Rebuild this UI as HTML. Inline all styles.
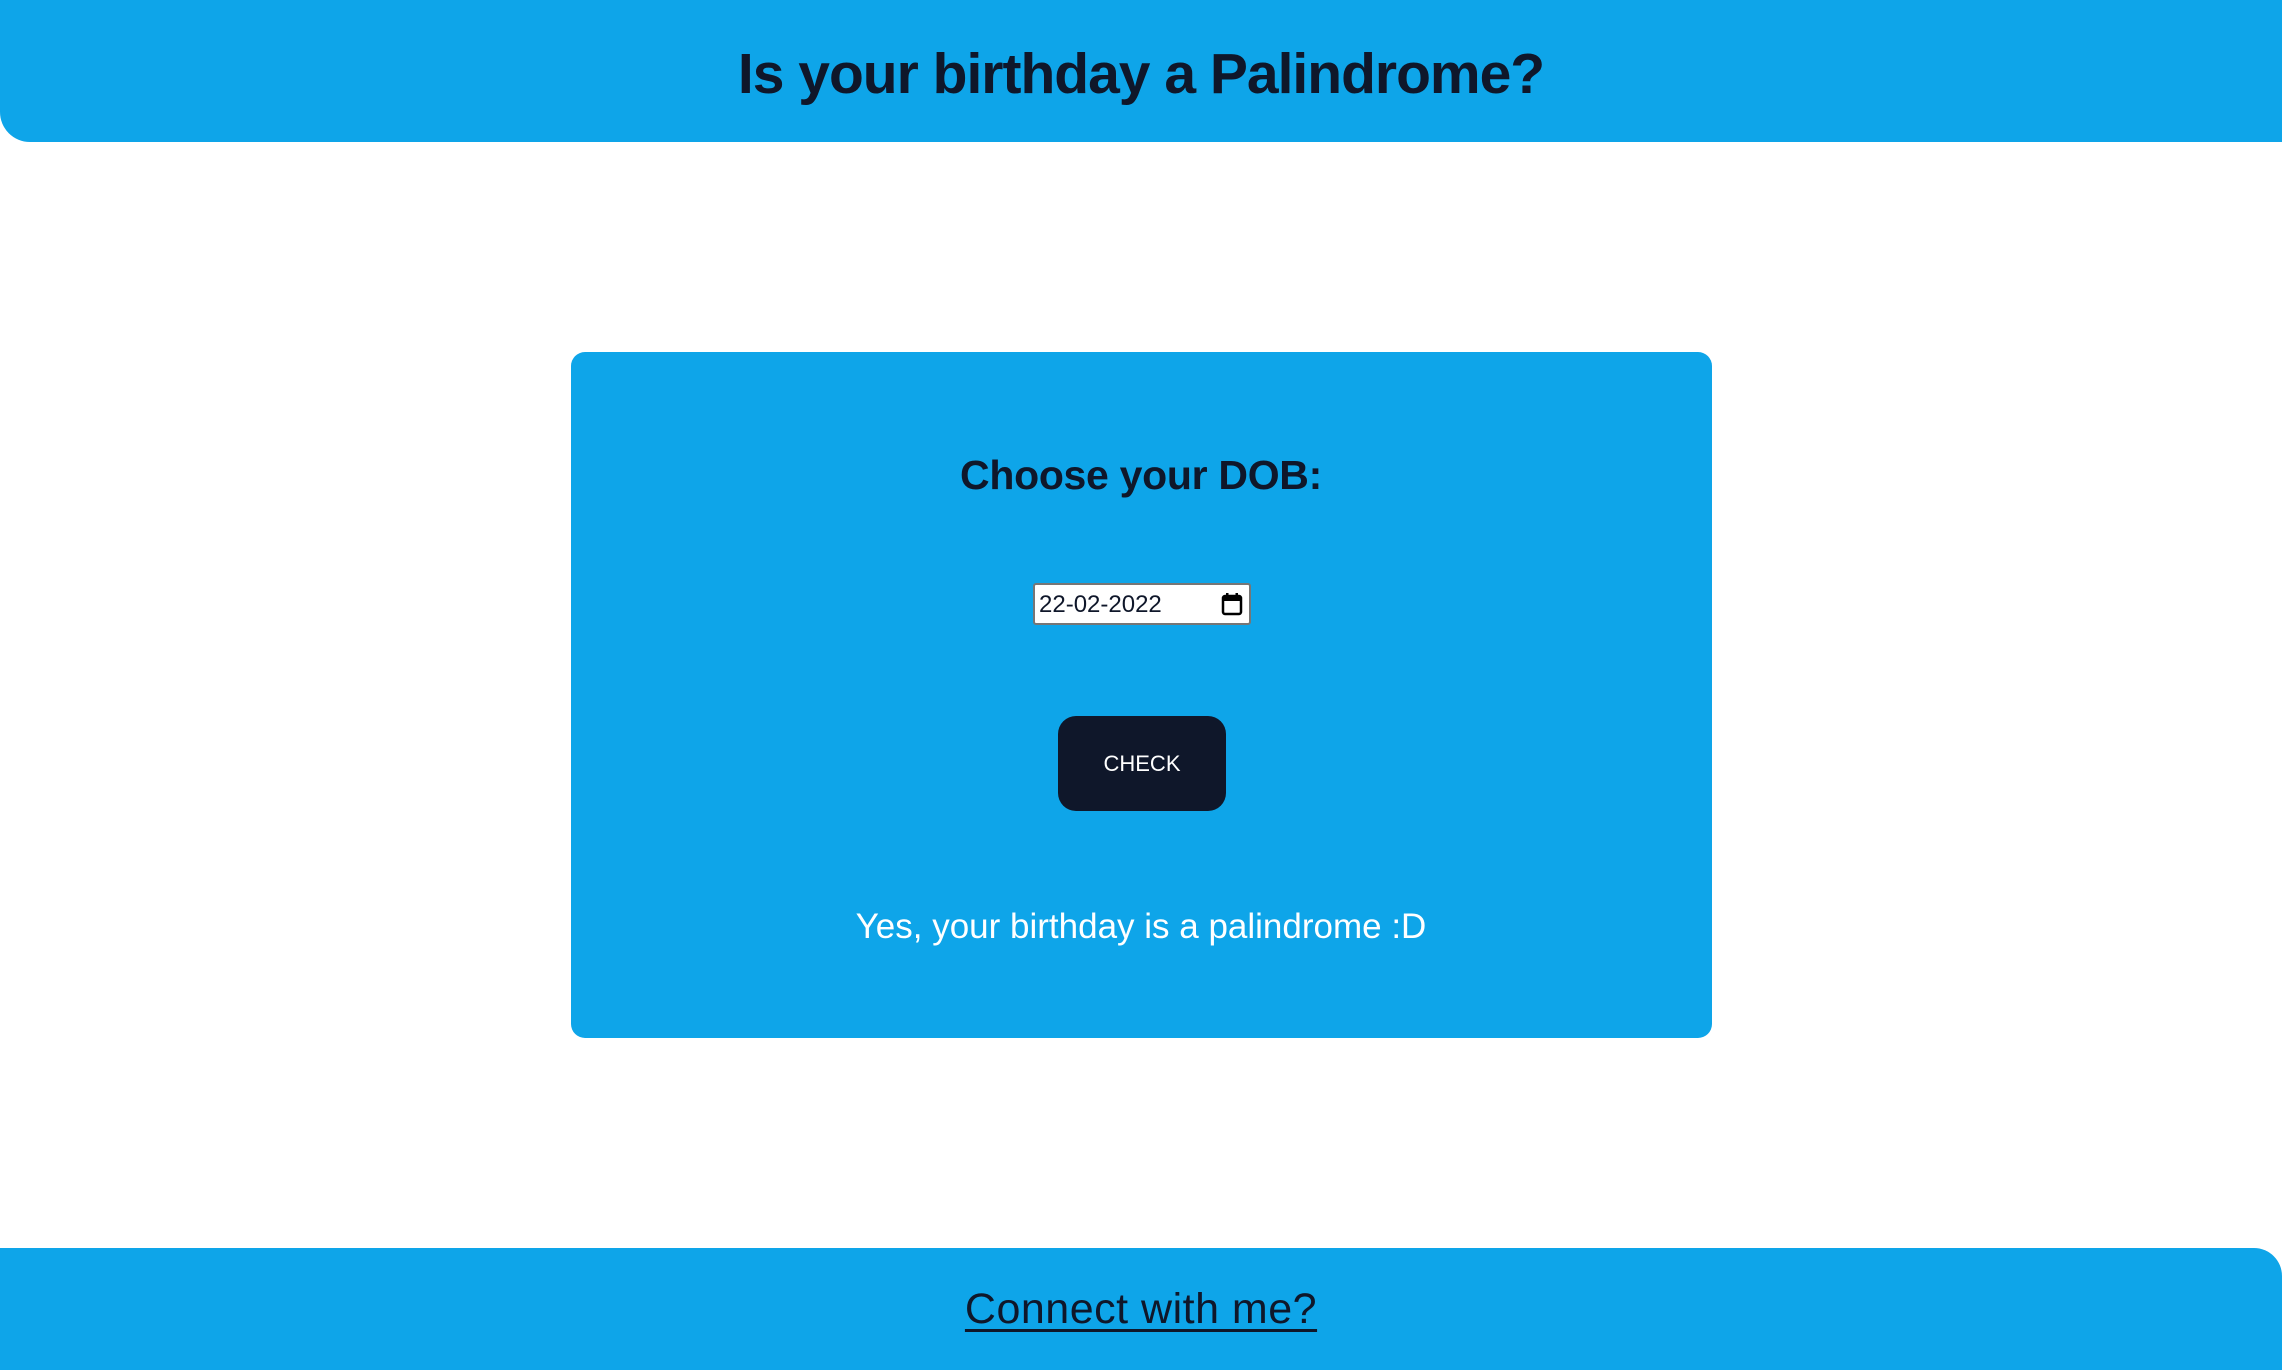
<!DOCTYPE html>
<html><head><meta charset="utf-8"><style>
*{margin:0;padding:0;box-sizing:border-box}
html,body{width:2282px;height:1370px;overflow:hidden;background:#fff;font-family:"Liberation Sans",sans-serif;color:#0f172a}
.hdr{position:absolute;left:0;top:0;width:2282px;height:142px;background:#0ea5e9;border-bottom-left-radius:30px;display:flex;align-items:center;justify-content:center;padding-top:6px}
.hdr h1{font-size:57px;font-weight:bold;letter-spacing:-1px}
.card{position:absolute;left:571px;top:352px;width:1141px;height:686px;background:#0ea5e9;border-radius:14px}
.t{position:absolute;left:0;width:100%;text-align:center}
.dob{top:452px;font-size:41px;font-weight:bold;letter-spacing:-0.3px}
.inp{position:absolute;left:1033px;top:583px;width:218px;height:42px;background:#fff;border:2px solid #767676;border-radius:3px;font-size:24px;padding:6px 0 0 4px;color:#0f172a}
.inp svg{position:absolute;right:6px;top:7px}
.btn{position:absolute;left:1058px;top:716px;width:168px;height:95px;background:#0f172a;border-radius:18px;color:#fff;font-size:22px;display:flex;align-items:center;justify-content:center}
.res{top:907px;font-size:35px;color:#fff}
.ftr{position:absolute;left:0;top:1248px;width:2282px;height:122px;background:#0ea5e9;border-top-right-radius:28px;display:flex;align-items:center;justify-content:center}
.ftr a{font-size:43px;color:#0f172a;text-decoration:underline;text-decoration-thickness:3px;text-underline-offset:6px;letter-spacing:0.5px}
</style></head><body>
<div class="hdr"><h1>Is your birthday a Palindrome?</h1></div>
<div class="card"></div>
<div class="t dob">Choose your DOB:</div>
<div class="inp">22-02-2022<svg width="22" height="24" viewBox="0 0 22 24"><rect x="2" y="4" width="18" height="18" rx="2" fill="none" stroke="#000" stroke-width="2.5"/><rect x="2" y="4" width="18" height="5" fill="#000"/><rect x="5" y="1" width="2.5" height="5" fill="#000"/><rect x="14.5" y="1" width="2.5" height="5" fill="#000"/></svg></div>
<div class="btn">CHECK</div>
<div class="t res">Yes, your birthday is a palindrome :D</div>
<div class="ftr"><a>Connect with me?</a></div>
</body></html>
